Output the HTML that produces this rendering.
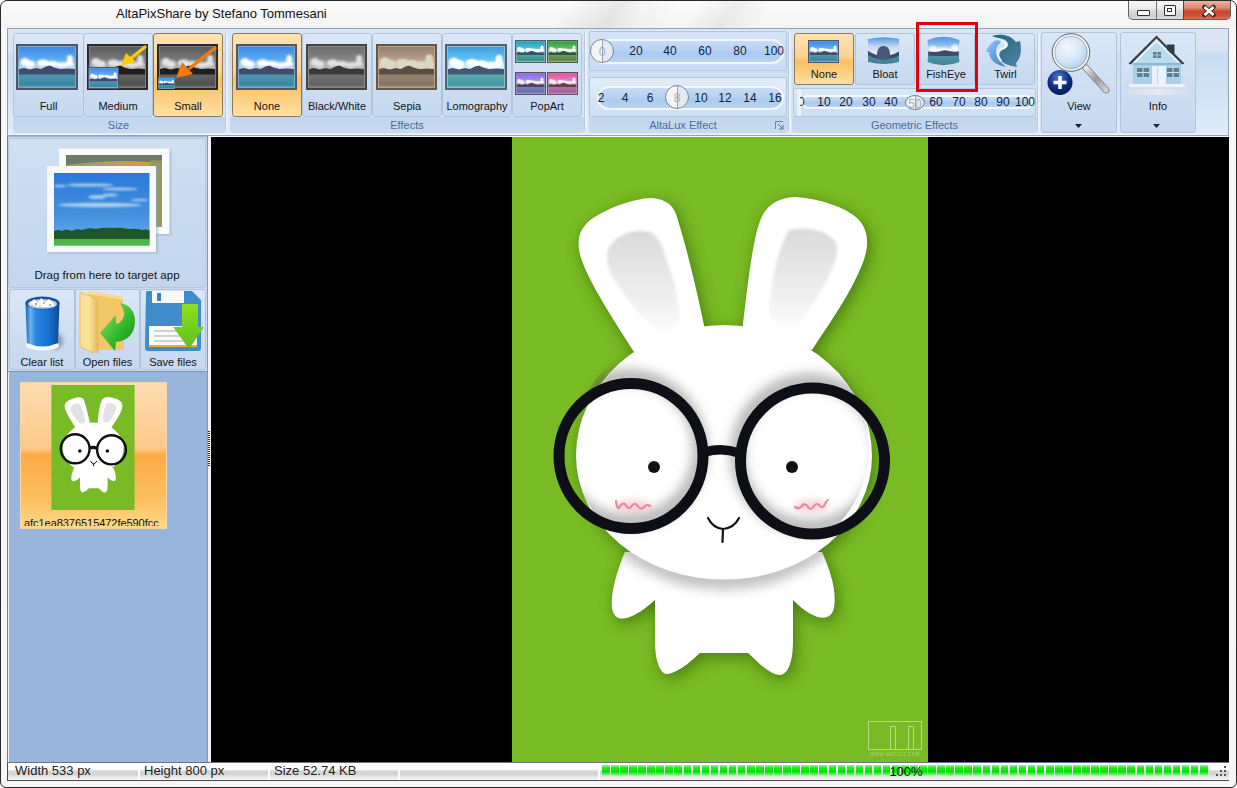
<!DOCTYPE html>
<html><head><meta charset="utf-8">
<style>
*{margin:0;padding:0;box-sizing:border-box}
html,body{width:1237px;height:788px;overflow:hidden;background:#fff}
body{position:relative;font-family:"Liberation Sans",sans-serif;color:#1e1e1e}
.a{position:absolute}
#frame{left:0;top:0;width:1237px;height:788px;border:1px solid #2a2a2a;border-radius:7px 7px 6px 6px;
 background:linear-gradient(#fbfbfb,#f3f3f3 25px,#f8f8f8 30px,#f6f6f6)}
#title{left:116px;top:6px;font-size:13px;color:#111;white-space:nowrap}
/* ribbon */
#ribbon{left:7px;top:28px;width:1222px;height:108px;border:1px solid #8fa3bb;
 background:linear-gradient(#dce6f3,#d9e4f2 20%,#cadcf1 24%,#d2e2f4 60%,#dfebf9 95%)}
.grp{position:absolute;top:33px;height:84px;border:1px solid #a9bfd8;border-radius:3px;
 background:linear-gradient(#d9e6f6,#cadcf1 45%,#c2d6ef)}
.glbl{position:absolute;top:118px;height:14px;font-size:11px;color:#4b6d9b;text-align:center;line-height:14px}
.sep{position:absolute;top:33px;width:1px;height:98px;background:#f4f8fd;border-left:1px solid #b7c9de}
.btn{position:absolute;top:33px;height:84px;border:1px solid #b0c4dc;border-radius:3px;
 background:linear-gradient(#dbe7f6,#cfdef2 50%,#c6d9f0)}
.btn.sel{border-color:#8e7a55;background:linear-gradient(#fde3b2,#fcd394 45%,#fbbf5e 55%,#fdd48c 85%,#fee2a8)}
.bl{position:absolute;left:0;right:0;font-size:11px;color:#151515;text-align:center;white-space:nowrap}
.land{position:absolute;border:2px solid #4d5766;
 background:
  linear-gradient(to bottom,transparent 0,transparent 62%,#5b6e86 62%,#3e4e63 68%,#44596c 72%,#3b8ea6 73%,#3a8399 100%),
  radial-gradient(ellipse 20% 18% at 18% 48%,#fff 40%,rgba(255,255,255,0) 100%),
  radial-gradient(ellipse 22% 14% at 45% 52%,#f4f6fb 40%,rgba(255,255,255,0) 100%),
  radial-gradient(ellipse 14% 20% at 86% 40%,#fff 40%,rgba(255,255,255,0) 100%),
  radial-gradient(ellipse 40% 12% at 60% 56%,#e7ecf6 30%,rgba(255,255,255,0) 100%),
  linear-gradient(#3f8fe3,#6cb0ee 40%,#b9d3ee 60%)}
.pill{position:absolute;border:2px solid #f3f8fe;background:linear-gradient(#c6dcf6,#b5d0f2 50%,#aacaf0 55%,#b8d3f3)}
.num{position:absolute;width:30px;text-align:center;font-size:12px;color:#15233a}
.knob{position:absolute;border:1px solid #7a8594;border-radius:50%;background:linear-gradient(90deg,#f4f5f6 50%,#e2eaf3 50%);text-align:center;overflow:hidden}
.knob span{font-size:12px;color:#a8aeb8;position:relative}
.knob i{position:absolute;left:50%;top:0;bottom:0;width:1px;background:#9aa4b0}
.seg{position:absolute;top:765px;width:7.6px;height:11px;background:linear-gradient(#9ff59a,#22ec20 25%,#00e400 60%,#5cf05a 85%,#c8f8c4)}
/* left panel */
#lp{left:7px;top:136px;width:202px;height:626px;background:#98b5dc;border-left:1px solid #8aa0bc}
#view{left:211px;top:137px;width:1018px;height:625px;background:#000}
#status{left:7px;top:762px;width:1222px;height:19px;border-bottom:1px solid #555;
 background:linear-gradient(#fefefe,#fbfbfb 45%,#d9d9d9 50%,#e6e6e6 80%,#f2f2f2)}
.st{position:absolute;top:0;font-size:13px;line-height:18px;color:#222;white-space:nowrap}
</style></head><body>
<div id="frame" class="a"></div>
<div class="a" style="left:1px;top:1px;width:1235px;height:27px;overflow:hidden;border-radius:6px 6px 0 0"><div class="a" style="left:560px;top:-5px;width:110px;height:40px;transform:skewX(-35deg);background:linear-gradient(90deg,rgba(0,0,0,0),rgba(0,0,0,0.07) 45%,rgba(0,0,0,0.02) 70%,rgba(0,0,0,0))"></div><div class="a" style="left:690px;top:-5px;width:70px;height:40px;transform:skewX(-35deg);background:linear-gradient(90deg,rgba(0,0,0,0),rgba(0,0,0,0.05) 50%,rgba(0,0,0,0))"></div></div>
<div id="title" class="a">AltaPixShare by Stefano Tommesani</div>

<div id="ribbon" class="a"></div>
<!--RIBBON-->
<svg width="0" height="0" style="position:absolute">
<defs>
<linearGradient id="sky" x1="0" y1="0" x2="0" y2="1"><stop offset="0" stop-color="#3a8be6"/><stop offset="0.3" stop-color="#5ca8f2"/><stop offset="0.55" stop-color="#c9d9ee"/></linearGradient>
<linearGradient id="water" x1="0" y1="0" x2="0" y2="1"><stop offset="0" stop-color="#4b97ae"/><stop offset="0.8" stop-color="#3b86a3"/><stop offset="1" stop-color="#5c9db5"/></linearGradient>
<filter id="cb" x="-30%" y="-30%" width="160%" height="160%"><feGaussianBlur stdDeviation="0.9"/></filter>
<symbol id="land" viewBox="0 0 62 46">
 <rect x="0" y="0" width="62" height="46" fill="#4b5767"/>
 <rect x="2" y="2" width="58" height="42" fill="#7fa8c4"/>
 <rect x="3" y="3" width="56" height="40" fill="url(#sky)"/>
 <g fill="#fff" filter="url(#cb)">
  <ellipse cx="9" cy="18" rx="4.5" ry="4"/>
  <ellipse cx="14" cy="20" rx="5" ry="3.5"/>
  <ellipse cx="27" cy="19" rx="6" ry="3.5"/>
  <ellipse cx="36" cy="20" rx="7" ry="3"/>
  <ellipse cx="46" cy="21" rx="6" ry="2.5"/>
  <ellipse cx="54" cy="15" rx="3" ry="4"/>
  <ellipse cx="53" cy="20" rx="5" ry="2.5"/>
 </g>
 <path d="M3 25 L8 24 L14 25.5 L20 24 L25 25 L30 22.5 L34 21.5 L38 23.5 L44 25 L52 24.5 L59 25 L59 31 L3 31 Z" fill="#3f4c6c"/>
 <rect x="3" y="30.5" width="56" height="12.5" fill="url(#water)"/>
</symbol>
</defs></svg>
<div class="a" style="left:13px;top:117px;width:212px;height:16px;border-radius:0 0 3px 3px;background:linear-gradient(#c3d6ee,#c8daf0)"></div>
<div class="a" style="left:230px;top:117px;width:354px;height:16px;border-radius:0 0 3px 3px;background:linear-gradient(#c3d6ee,#c8daf0)"></div>
<div class="a" style="left:589px;top:117px;width:199px;height:16px;border-radius:0 0 3px 3px;background:linear-gradient(#c3d6ee,#c8daf0)"></div>
<div class="a" style="left:792px;top:117px;width:245px;height:16px;border-radius:0 0 3px 3px;background:linear-gradient(#c3d6ee,#c8daf0)"></div>
<div class="a" style="left:8px;top:134px;width:1220px;height:1px;background:#eef4fb"></div>
<div class="a" style="left:225px;top:33px;width:4px;height:98px;background:linear-gradient(90deg,#b9cbe0 0,#b9cbe0 1px,#f2f6fb 1px,#e6eef8 3px,#cbdcf0 4px)"></div>
<div class="a" style="left:584px;top:33px;width:4px;height:98px;background:linear-gradient(90deg,#b9cbe0 0,#b9cbe0 1px,#f2f6fb 1px,#e6eef8 3px,#cbdcf0 4px)"></div>
<div class="a" style="left:788px;top:33px;width:4px;height:98px;background:linear-gradient(90deg,#b9cbe0 0,#b9cbe0 1px,#f2f6fb 1px,#e6eef8 3px,#cbdcf0 4px)"></div>
<div class="a" style="left:1037px;top:33px;width:4px;height:98px;background:linear-gradient(90deg,#b9cbe0 0,#b9cbe0 1px,#f2f6fb 1px,#e6eef8 3px,#cbdcf0 4px)"></div>
<div class="btn" style="left:13px;top:33px;width:71px;height:84px"><div class="bl" style="top:66px">Full</div></div>
<div class="btn" style="left:83px;top:33px;width:70px;height:84px"><div class="bl" style="top:66px">Medium</div></div>
<div class="btn sel" style="left:153px;top:33px;width:70px;height:84px"><div class="bl" style="top:66px">Small</div></div>
<svg class="a" style="left:16px;top:44px;" width="62" height="46" viewBox="0 0 62 46" preserveAspectRatio="none"><use href="#land"/></svg>
<svg class="a" style="left:87px;top:44px;filter:grayscale(1) brightness(0.78) contrast(1.4);" width="61" height="46" viewBox="0 0 62 46" preserveAspectRatio="none"><use href="#land"/></svg>
<svg class="a" style="left:88px;top:67px;" width="31" height="22" viewBox="0 0 62 46" preserveAspectRatio="none"><use href="#land"/></svg>
<svg class="a" style="left:118px;top:44px" width="30" height="26" viewBox="0 0 30 26"><path d="M27 3 L12 15" stroke="#f5cd00" stroke-width="3.5" stroke-linecap="round"/><path d="M3 22 L8 9 L18 18 Z" fill="#f5cd00"/></svg>
<svg class="a" style="left:157px;top:44px;filter:grayscale(1) brightness(0.78) contrast(1.4);" width="61" height="46" viewBox="0 0 62 46" preserveAspectRatio="none"><use href="#land"/></svg>
<svg class="a" style="left:158px;top:77px;" width="17" height="12" viewBox="0 0 62 46" preserveAspectRatio="none"><use href="#land"/></svg>
<svg class="a" style="left:172px;top:44px" width="46" height="36" viewBox="0 0 46 36"><path d="M43 4 L18 24" stroke="#f07a10" stroke-width="3.5" stroke-linecap="round"/><path d="M4 34 L10 18 L21 30 Z" fill="#f07a10"/></svg>
<div class="glbl" style="left:13px;width:211px">Size</div>
<div class="btn sel" style="left:232px;top:33px;width:70px;height:84px"><div class="bl" style="top:66px">None</div></div>
<div class="btn" style="left:302px;top:33px;width:70px;height:84px"><div class="bl" style="top:66px">Black/White</div></div>
<div class="btn" style="left:372px;top:33px;width:70px;height:84px"><div class="bl" style="top:66px">Sepia</div></div>
<div class="btn" style="left:442px;top:33px;width:70px;height:84px"><div class="bl" style="top:66px">Lomography</div></div>
<div class="btn" style="left:512px;top:33px;width:70px;height:84px"><div class="bl" style="top:66px">PopArt</div></div>
<svg class="a" style="left:236px;top:44px;" width="61" height="46" viewBox="0 0 62 46" preserveAspectRatio="none"><use href="#land"/></svg>
<svg class="a" style="left:306px;top:44px;filter:grayscale(1) brightness(0.85) contrast(1.1);" width="61" height="46" viewBox="0 0 62 46" preserveAspectRatio="none"><use href="#land"/></svg>
<svg class="a" style="left:376px;top:44px;filter:sepia(1) saturate(0.75) hue-rotate(-12deg) brightness(0.85);" width="61" height="46" viewBox="0 0 62 46" preserveAspectRatio="none"><use href="#land"/></svg>
<svg class="a" style="left:445px;top:44px;filter:saturate(0.85) brightness(1.12) hue-rotate(-12deg);" width="62" height="46" viewBox="0 0 62 46" preserveAspectRatio="none"><use href="#land"/></svg>
<svg class="a" style="left:515px;top:40px;filter:hue-rotate(-25deg) saturate(0.9) brightness(1.05);" width="31" height="23" viewBox="0 0 62 46" preserveAspectRatio="none"><use href="#land"/></svg>
<svg class="a" style="left:547px;top:40px;filter:hue-rotate(-95deg) saturate(0.85) brightness(1.0);" width="31" height="23" viewBox="0 0 62 46" preserveAspectRatio="none"><use href="#land"/></svg>
<svg class="a" style="left:515px;top:72px;filter:hue-rotate(45deg) saturate(0.9) brightness(0.95);" width="31" height="23" viewBox="0 0 62 46" preserveAspectRatio="none"><use href="#land"/></svg>
<svg class="a" style="left:547px;top:72px;filter:hue-rotate(105deg) saturate(0.9) brightness(0.95);" width="31" height="23" viewBox="0 0 62 46" preserveAspectRatio="none"><use href="#land"/></svg>
<div class="glbl" style="left:230px;width:354px">Effects</div>
<div class="a" style="left:589px;top:31px;width:198px;height:40px;border:1px solid #b3c8e0;border-radius:2px;background:linear-gradient(#d4e4f7,#c8dcf3)"></div>
<div class="a" style="left:589px;top:77px;width:198px;height:40px;border:1px solid #b3c8e0;border-radius:2px;background:linear-gradient(#e2ecf8,#cddff3)"></div>
<div class="pill" style="left:591px;top:39px;width:193px;height:25px;border-radius:12px"></div><div class="num" style="left:621px;top:39px;height:25px;line-height:25px">20</div><div class="num" style="left:655px;top:39px;height:25px;line-height:25px">40</div><div class="num" style="left:690px;top:39px;height:25px;line-height:25px">60</div><div class="num" style="left:725px;top:39px;height:25px;line-height:25px">80</div><div class="num" style="left:759px;top:39px;height:25px;line-height:25px">100</div><div class="knob" style="left:590px;top:39px;width:24px;height:24px;line-height:22px"><span>0</span><i></i></div>
<div class="pill" style="left:597px;top:86px;width:187px;height:24px;border-radius:12px"></div><div class="num" style="left:586px;top:86px;height:24px;line-height:24px">2</div><div class="num" style="left:610px;top:86px;height:24px;line-height:24px">4</div><div class="num" style="left:635px;top:86px;height:24px;line-height:24px">6</div><div class="num" style="left:686px;top:86px;height:24px;line-height:24px">10</div><div class="num" style="left:710px;top:86px;height:24px;line-height:24px">12</div><div class="num" style="left:735px;top:86px;height:24px;line-height:24px">14</div><div class="num" style="left:760px;top:86px;height:24px;line-height:24px">16</div><div class="knob" style="left:665px;top:85px;width:24px;height:24px;line-height:22px"><span>8</span><i></i></div>
<div class="glbl" style="left:589px;width:188px">AltaLux Effect</div>
<svg class="a" style="left:775px;top:121px" width="9" height="9" viewBox="0 0 9 9"><path d="M0.5 0.5 H8 M0.5 0.5 V8" stroke="#6d87a8" fill="none"/><path d="M3 3 L8 8 M8 4 V8 H4" stroke="#5a7090" fill="none"/></svg>
<div class="btn sel" style="left:794px;top:33px;width:60px;height:52px"><div class="bl" style="top:34px">None</div></div>
<div class="btn" style="left:855px;top:33px;width:60px;height:52px"><div class="bl" style="top:34px">Bloat</div></div>
<div class="btn" style="left:917px;top:33px;width:58px;height:52px"><div class="bl" style="top:34px">FishEye</div></div>
<div class="btn" style="left:976px;top:33px;width:59px;height:52px"><div class="bl" style="top:34px">Twirl</div></div>
<svg class="a" style="left:808px;top:40px;" width="31" height="23" viewBox="0 0 62 46" preserveAspectRatio="none"><use href="#land"/></svg>
<div class="a" style="left:793px;top:88px;width:243px;height:29px;border:1px solid #b3c8e0;border-radius:2px;background:linear-gradient(#dbe7f6,#cddff3)"></div>
<div class="pill" style="left:801px;top:95px;width:232px;height:14px;border-radius:7px"></div><div class="num" style="left:809px;top:95px;height:14px;line-height:14px">10</div><div class="num" style="left:831px;top:95px;height:14px;line-height:14px">20</div><div class="num" style="left:854px;top:95px;height:14px;line-height:14px">30</div><div class="num" style="left:876px;top:95px;height:14px;line-height:14px">40</div><div class="num" style="left:921px;top:95px;height:14px;line-height:14px">60</div><div class="num" style="left:944px;top:95px;height:14px;line-height:14px">70</div><div class="num" style="left:966px;top:95px;height:14px;line-height:14px">80</div><div class="num" style="left:988px;top:95px;height:14px;line-height:14px">90</div><div class="num" style="left:1010px;top:95px;height:14px;line-height:14px">100</div><div class="knob" style="left:905px;top:95px;width:20px;height:15px;line-height:13px"><span>50</span><i></i></div>
<div class="a" style="left:797px;top:89px;width:4px;height:27px;background:linear-gradient(90deg,#e4edf8,#f4f8fd)"></div><div class="a" style="left:800px;top:95px;width:8px;height:14px;overflow:hidden;font-size:12px;line-height:14px;color:#333"><span style="position:relative;left:-2px">0</span></div>
<div class="glbl" style="left:792px;width:245px">Geometric Effects</div>
<div class="btn" style="left:1041px;top:32px;width:76px;height:101px"><div class="bl" style="top:67px">View</div></div>
<div class="btn" style="left:1120px;top:32px;width:76px;height:101px"><div class="bl" style="top:67px">Info</div></div>
<svg class="a" style="left:927px;top:36px" width="33" height="30" viewBox="0 0 33 30">
<defs><clipPath id="pillow"><path d="M0.5 4 Q16.5 -2.5 32.5 4 Q31 15 32.5 26 Q16.5 32.5 0.5 26 Q2 15 0.5 4 Z"/></clipPath>
<linearGradient id="fsk" x1="0" y1="0" x2="0" y2="1"><stop offset="0" stop-color="#4a94e0"/><stop offset="0.3" stop-color="#8cbcec"/><stop offset="0.5" stop-color="#e4e8f4"/></linearGradient>
<linearGradient id="fwa" x1="0" y1="0" x2="0" y2="1"><stop offset="0" stop-color="#4f97ab"/><stop offset="1" stop-color="#3f7f98"/></linearGradient></defs>
<g clip-path="url(#pillow)">
<rect width="33" height="30" fill="url(#fsk)"/>
<g fill="#fff" opacity="0.85" filter="url(#cb)"><ellipse cx="6" cy="13" rx="4" ry="3"/><ellipse cx="16" cy="14" rx="8" ry="2.5"/><ellipse cx="28" cy="12" rx="4" ry="3.5"/></g>
<path d="M0 15 Q8 17 14 15 Q18 13.5 22 15 Q28 16.5 33 15 L33 20 Q16.5 21.5 0 20 Z" fill="#3e4b69"/>
<path d="M0 19.5 Q16.5 21 33 19.5 L33 30 L0 30 Z" fill="url(#fwa)"/>
</g></svg>
<svg class="a" style="left:868px;top:37px" width="32" height="28" viewBox="0 0 32 28">
<defs><clipPath id="pillow2"><path d="M0 2 Q16 -1.5 31 2 L31 25 Q16 29 0 25 Z"/></clipPath>
<linearGradient id="bsky" x1="0" y1="0" x2="0" y2="1"><stop offset="0" stop-color="#4e98e0"/><stop offset="0.35" stop-color="#c8d8f0"/><stop offset="0.6" stop-color="#e8e8f4"/></linearGradient>
<linearGradient id="bwat" x1="0" y1="0" x2="0" y2="1"><stop offset="0" stop-color="#4f8ea6"/><stop offset="1" stop-color="#3f7e96"/></linearGradient></defs>
<g clip-path="url(#pillow2)">
<rect width="32" height="28" fill="url(#bsky)"/>
<path d="M0 14 Q16 26 32 14 L32 28 L0 28 Z" fill="url(#bwat)"/>
<path d="M0 14 Q16 24 32 14 L32 18 Q16 27 0 18 Z" fill="#3d4a66"/>
<path d="M9 22 Q8 9 15.5 9 Q23 9 22 22 Z" fill="#4b5776"/>
</g></svg>
<svg class="a" style="left:982px;top:32px" width="44" height="38" viewBox="982 32 44 38">
<defs><linearGradient id="tw1" x1="0" y1="0" x2="1" y2="1"><stop offset="0" stop-color="#2a6476"/><stop offset="1" stop-color="#4d84a6"/></linearGradient>
<linearGradient id="tw2" x1="0" y1="0" x2="1" y2="1"><stop offset="0" stop-color="#9ccaf6"/><stop offset="0.5" stop-color="#5aa2e8"/><stop offset="1" stop-color="#3f7eb8"/></linearGradient></defs>
<path d="M 992 36 C 1001 33, 1011 35, 1016 42 L 1020 41 C 1022 50, 1021 58, 1016 63 L 1017 67 C 1010 66, 1003 64, 1000 59 C 997 54, 1000 49, 1005 48 C 1009 47, 1009 42, 1005 40 C 1001 38, 996 38, 992 36 Z" fill="url(#tw1)"/>
<path d="M 994 41 C 990 44, 987 48, 986 52 L 989 52 C 989 59, 995 65, 1006 67 C 1000 62, 995 56, 996 50 C 997 45, 1000 43, 1001 42 C 999 40, 996 40, 994 41 Z" fill="url(#tw2)"/>
<path d="M 1001 41 C 1006 42, 1008 46, 1004 48 C 998 50, 996 55, 1001 61" fill="none" stroke="#f0f6fc" stroke-width="2.2"/>
</svg>
<div class="a" style="left:916px;top:22px;width:62px;height:70px;border:3px solid #e0000e"></div>
<svg class="a" style="left:1045px;top:32px" width="68" height="66" viewBox="1045 32 68 66">
<defs><radialGradient id="lens" cx="0.4" cy="0.35" r="0.7"><stop offset="0" stop-color="#f4f8fd"/><stop offset="0.6" stop-color="#d4e4f5"/><stop offset="1" stop-color="#a9c6e6"/></radialGradient>
<linearGradient id="handle" x1="0" y1="0" x2="1" y2="1"><stop offset="0" stop-color="#e8e8e8"/><stop offset="0.5" stop-color="#9a9a9a"/><stop offset="1" stop-color="#d0d0d0"/></linearGradient>
<radialGradient id="plus" cx="0.45" cy="0.3" r="0.7"><stop offset="0" stop-color="#4f7fd0"/><stop offset="0.6" stop-color="#0c2f86"/><stop offset="1" stop-color="#061a55"/></radialGradient></defs>
<path d="M1086 68 L1106 90" stroke="#8d8d8d" stroke-width="7" stroke-linecap="round"/>
<path d="M1086 68 L1106 90" stroke="url(#handle)" stroke-width="5" stroke-linecap="round"/>
<circle cx="1071" cy="52.5" r="17.5" fill="url(#lens)" stroke="#f2f2f2" stroke-width="2.2"/>
<circle cx="1071" cy="52.5" r="18.8" fill="none" stroke="#5d6670" stroke-width="1"/>
<circle cx="1071" cy="52.5" r="16.2" fill="none" stroke="#8a96a4" stroke-width="0.6"/>
<circle cx="1060" cy="82.5" r="12.5" fill="url(#plus)"/>
<path d="M1060 76 V89 M1053.5 82.5 H1066.5" stroke="#fff" stroke-width="3.5"/>
</svg>
<svg class="a" style="left:1126px;top:33px" width="66" height="64" viewBox="1126 33 66 64">
<defs><linearGradient id="base" x1="0" y1="0" x2="1" y2="0"><stop offset="0" stop-color="#d8dde6"/><stop offset="0.5" stop-color="#eceef2"/><stop offset="1" stop-color="#d8dde6"/></linearGradient></defs>
<rect x="1167" y="44.5" width="7.5" height="9" fill="#2e3a44"/>
<rect x="1133" y="60" width="48" height="25" fill="#a9d0e6"/>
<path d="M1156.5 35.5 L1128.5 63.5 L1131 64.5 L1156.5 38.5 L1182 64.5 L1184.5 63.5 Z" fill="#33424e"/>
<path d="M1156.5 39.5 L1132 63.5 L1181 63.5 Z" fill="#eaf4fa"/>
<path d="M1156.5 42 L1135 63 L1178 63 Z" fill="#b9dcee"/>
<rect x="1133" y="63" width="48" height="2" fill="#8eb6cc"/>
<rect x="1153" y="52" width="8" height="6" fill="#5f7f92"/>
<path d="M1153 55 H1161 M1157 52 V58" stroke="#b7dcef" stroke-width="0.8"/>
<rect x="1137" y="68" width="12" height="9" fill="#5f7f92"/>
<rect x="1167" y="68" width="12" height="9" fill="#5f7f92"/>
<path d="M1137 72.5 H1149 M1143 68 V77 M1167 72.5 H1179 M1173 68 V77" stroke="#d0e6f1" stroke-width="1"/>
<rect x="1152" y="66" width="14" height="18" fill="#e9f2f8"/>
<path d="M1157.5 66 V84" stroke="#b9cfdc" stroke-width="0.8"/>
<rect x="1129" y="84" width="56" height="3" fill="#eef2f6"/>
<path d="M1128 89 L1186 89 L1190 95 L1124 95 Z" fill="url(#base)" opacity="0.8"/>
</svg>
<svg class="a" style="left:1075px;top:124px" width="7" height="4" viewBox="0 0 7 4"><path d="M0 0 H7 L3.5 4 Z" fill="#222"/></svg>
<svg class="a" style="left:1153px;top:124px" width="7" height="4" viewBox="0 0 7 4"><path d="M0 0 H7 L3.5 4 Z" fill="#222"/></svg>
<div class="a" style="left:1128px;top:1px;width:103px;height:19px;border:1px solid #5e5e5e;border-top:none;border-radius:0 0 5px 5px;overflow:hidden;background:linear-gradient(#f6f6f6,#ececec 40%,#d9d9d9 55%,#cfcfcf 85%,#e0e0e0)">
<div class="a" style="left:27px;top:0;width:1px;height:19px;background:#6f6f6f"></div>
<div class="a" style="left:54px;top:0;width:49px;height:19px;border-left:1px solid #6a3a30;background:linear-gradient(#eeb0a2,#e08a74 35%,#c94428 55%,#d0583a 80%,#e07a5e)"></div>
<div class="a" style="left:8px;top:9px;width:13px;height:6px;border:1.5px solid #2e2e2e;background:#fafafa;border-radius:1px"></div>
<div class="a" style="left:35px;top:4px;width:12px;height:11px;border:1.5px solid #2e2e2e;background:#fafafa;border-radius:1px"><div class="a" style="left:2px;top:2px;width:5px;height:4px;border:1.5px solid #2e2e2e"></div></div>
<svg class="a" style="left:72px;top:3px" width="16" height="14" viewBox="0 0 16 14"><path d="M3.5 3 L12.5 11 M12.5 3 L3.5 11" stroke="#4a2a26" stroke-width="4.6" stroke-linecap="round"/><path d="M3.5 3 L12.5 11 M12.5 3 L3.5 11" stroke="#fff" stroke-width="2.6" stroke-linecap="butt"/></svg>
</div>
<!--/RIBBON-->

<!--LEFT-->
<div class="a" style="left:7px;top:136px;width:202px;height:626px;background:#98b5dc"></div>
<div class="a" style="left:7px;top:136px;width:1px;height:626px;background:#6f7f94"></div><div class="a" style="left:8px;top:372px;width:1px;height:390px;background:#eef3fa"></div>
<div class="a" style="left:207px;top:136px;width:1px;height:626px;background:#8796ab"></div>
<div class="a" style="left:208px;top:136px;width:3px;height:626px;background:#f0f2f5"></div>
<div class="a" style="left:8px;top:137px;width:199px;height:234px;background:#c9daf0"></div>
<div class="a" style="left:8px;top:138px;width:198px;height:150px;border:1px solid #b4c7de;border-radius:3px;background:linear-gradient(#d0dff2,#c8daf0 60%,#c3d6ee)"></div>
<svg class="a" style="left:44px;top:146px" width="130" height="110" viewBox="44 146 130 110">
<defs>
<linearGradient id="fsky" x1="0" y1="0" x2="0" y2="1"><stop offset="0" stop-color="#2a78da"/><stop offset="0.6" stop-color="#4692de"/><stop offset="1" stop-color="#6cb0e8"/></linearGradient>
<linearGradient id="field" x1="0" y1="0" x2="1" y2="0.3"><stop offset="0" stop-color="#8c9a7a"/><stop offset="0.5" stop-color="#b5a060"/><stop offset="0.75" stop-color="#d89a3a"/><stop offset="1" stop-color="#9aa070"/></linearGradient>
<filter id="fsh"><feGaussianBlur stdDeviation="0.8"/></filter>
</defs>
<rect x="60" y="149.5" width="111" height="86" fill="#8aa0bb" opacity="0.5" filter="url(#fsh)"/>
<rect x="59" y="148.5" width="110.5" height="85.5" fill="#fbfbfb"/>
<rect x="66" y="155" width="96" height="72" fill="url(#field)"/>
<path d="M66 155 H162 V163 Q120 158 66 165 Z" fill="#6e7a6a"/>
<path d="M150 160 L162 160 L162 227 L152 227 Z" fill="#8e9a5c" opacity="0.8"/>
<rect x="48" y="167" width="110" height="86.5" fill="#8aa0bb" opacity="0.5" filter="url(#fsh)"/>
<rect x="47" y="166" width="109" height="86" fill="#f8f8f8"/>
<rect x="54" y="173" width="95.5" height="72.5" fill="url(#fsky)"/>
<g fill="#e8f2fb" opacity="0.65" filter="url(#fsh)">
<ellipse cx="90" cy="185" rx="24" ry="1.6"/><ellipse cx="120" cy="189" rx="18" ry="1.4"/>
<ellipse cx="97" cy="197" rx="9" ry="2"/><ellipse cx="110" cy="195" rx="8" ry="1.4"/><ellipse cx="100" cy="205" rx="42" ry="2.2"/>
<ellipse cx="60" cy="186" rx="6" ry="1.3"/><ellipse cx="140" cy="200" rx="9" ry="1.2"/>
</g>
<path d="M54 231 Q58 229 62 231 Q66 228 72 231 Q76 228 82 230 Q88 227 96 229 Q104 227 112 228 Q120 227 128 229 Q136 228 142 230 Q146 229 149.5 230 L149.5 240.5 L54 240.5 Z" fill="#1d5628"/>
<rect x="54" y="239.5" width="95.5" height="6" fill="#4ab648"/><rect x="54" y="239" width="95.5" height="1" fill="#6ac060" opacity="0.6"/>
</svg>
<div class="a" style="left:8px;top:269px;width:198px;text-align:center;font-size:11.5px;color:#151515;white-space:nowrap">Drag from here to target app</div>
<div class="btn" style="left:9px;top:289px;width:66px;height:81px"><div class="bl" style="top:66px">Clear list</div></div>
<div class="btn" style="left:75px;top:289px;width:65px;height:81px"><div class="bl" style="top:66px">Open files</div></div>
<div class="btn" style="left:140px;top:289px;width:66px;height:81px"><div class="bl" style="top:66px">Save files</div></div>
<svg class="a" style="left:22px;top:294px" width="46" height="60" viewBox="22 294 46 60">
<defs><linearGradient id="bin" x1="0" y1="0" x2="1" y2="0"><stop offset="0" stop-color="#1a5fb0"/><stop offset="0.15" stop-color="#6ab2f2"/><stop offset="0.3" stop-color="#2a86e0"/><stop offset="0.7" stop-color="#1470cc"/><stop offset="1" stop-color="#0c4a96"/></linearGradient>
<filter id="bsh" x="-50%" y="-50%" width="200%" height="200%"><feGaussianBlur stdDeviation="2.2"/></filter></defs>
<ellipse cx="56" cy="341" rx="7" ry="8" fill="#3a4a60" opacity="0.45" filter="url(#bsh)"/>
<ellipse cx="42.5" cy="345.5" rx="16.5" ry="5" fill="#f6f9fc"/>
<path d="M25.5 303 L27 343 Q42.5 350 58 343 L59.5 303 Z" fill="url(#bin)"/>
<ellipse cx="42.5" cy="303" rx="17" ry="6.5" fill="#1552a0"/>
<ellipse cx="42.5" cy="304" rx="14.5" ry="4.8" fill="#c9ced6"/>
<g fill="#fff"><path d="M30 304 L34 299 L38 303 L41 298 L45 302 L49 299 L53 303 L55 306 L46 307 L38 307 Z"/></g>
<g fill="#8a929c" opacity="0.8"><circle cx="36" cy="304" r="1.2"/><circle cx="44" cy="303" r="1"/><circle cx="50" cy="305" r="1.1"/><circle cx="40" cy="306" r="0.8"/></g>
</svg>
<svg class="a" style="left:77px;top:290px" width="60" height="63" viewBox="77 290 60 63">
<defs><linearGradient id="fold" x1="0" y1="0" x2="1" y2="0"><stop offset="0" stop-color="#f5e08a"/><stop offset="0.5" stop-color="#fbe39a"/><stop offset="1" stop-color="#e8b858"/></linearGradient>
<linearGradient id="garr" x1="0" y1="0" x2="1" y2="1"><stop offset="0" stop-color="#9be86a"/><stop offset="0.6" stop-color="#2fb52a"/><stop offset="1" stop-color="#138a1a"/></linearGradient></defs>
<path d="M88 291 L123 297 L124 350 L92 350 Z" fill="#f0c868"/>
<path d="M88 291 L123 297 L123 300 L88 294 Z" fill="#f8dc90"/>
<path d="M80 292 L97 299 L98 355 L80 347 Z" fill="url(#fold)"/>
<path d="M80 292 L97 299 L98 355 L80 347 Z" fill="none" stroke="#d9b25a" stroke-width="0.7"/>
<path d="M100 333 L116 315 L116 324 Q124 322 124 313 Q123 307 120 303 Q135 306 135 322 Q134 340 116 342 L115 351 Z" fill="url(#garr)"/>
</svg>
<svg class="a" style="left:144px;top:290px" width="62" height="62" viewBox="144 290 62 62">
<defs><linearGradient id="arr2" x1="0" y1="0" x2="0" y2="1"><stop offset="0" stop-color="#8fe01a"/><stop offset="1" stop-color="#5fbf20"/></linearGradient></defs>
<path d="M146 293 Q145 291 148 291 L192 291 L201 300 L201 348 Q201 351 198 351 L148 351 Q145 351 145 348 Z" fill="#3f8cc8"/>
<rect x="152" y="291" width="32" height="12" fill="#fafafa"/>
<rect x="157" y="293" width="4" height="8" fill="#3a84bf"/>
<rect x="149" y="326" width="48" height="21" fill="#fbfbfb"/>
<rect x="149" y="345" width="48" height="2" fill="#f0a830"/>
<path d="M154 331 H188 M154 336 H188 M154 341 H188" stroke="#a8a8b0" stroke-width="1.2"/>
<path d="M182 304 L198 304 L198 327 L204 327 L189 349 L173 327 L182 327 Z" fill="url(#arr2)"/>
</svg>
<div class="a" style="left:8px;top:371px;width:199px;height:1px;background:#7f93ad"></div>
<div class="a" style="left:20px;top:382px;width:147px;height:147px;background:linear-gradient(#fedcb0,#fdc98a 45%,#fbab45 50%,#fdc060 80%,#ffd88a);border:1px solid #f5d8b0"></div>
<svg class="a" style="left:51px;top:385px" width="84" height="125" viewBox="512 137 416 625">
<rect x="512" y="137" width="416" height="625" fill="#79bb24"/>
<g fill="#fff">
<path d="M 634 352 C 612 318, 588 280, 581 258 C 575 238, 580 225, 598 215 C 615 205, 635 199, 650 198 C 662 198, 672 203, 676 214 C 686 245, 697 290, 706 335 Z"/>
<path d="M 742 332 C 747 290, 752 245, 759 224 C 764 206, 778 197, 796 197 C 820 199, 845 207, 857 218 C 870 230, 869 248, 862 265 C 850 295, 830 322, 812 350 Z"/>
<path d="M 625 552 C 615 575, 609 600, 613 612 C 617 623, 632 621, 655 600 L 655 642 C 655 660, 660 675, 668 674 C 680 672, 692 660, 700 653 L 748 653 C 756 660, 770 676, 781 675 C 791 672, 793 655, 793 640 L 793 600 C 815 622, 831 622, 834 608 C 837 590, 830 570, 822 552 Z"/>
<ellipse cx="721" cy="452" rx="152" ry="128"/>
</g>
<g fill="#e2e2e2"><path d="M 607 258 C 606 240, 628 229, 645 231 C 655 232, 660 240, 664 252 C 672 275, 680 300, 680 315 C 680 328, 668 332, 657 329 C 640 318, 628 300, 618 285 C 610 273, 607 266, 607 258 Z"/>
<path d="M 789 230 C 810 226, 832 232, 837 245 C 840 262, 820 295, 800 322 C 790 330, 770 325, 769 312 C 770 290, 775 255, 789 230 Z"/></g>
<g fill="none" stroke="#0e0e16" stroke-width="12"><ellipse cx="631" cy="456" rx="72" ry="72.5"/><ellipse cx="812.5" cy="461" rx="72" ry="73"/><path d="M 705 452 Q 722 446 739 453" stroke-width="16"/></g>
<circle cx="654" cy="467" r="9" fill="#111"/><circle cx="792" cy="467" r="9" fill="#111"/>
<path d="M 708 517 Q 714 530 723 531 Q 733 530 739 517 M 723 531 L 723 543" stroke="#111" stroke-width="5" fill="none"/>
</svg>
<div class="a" style="left:24px;top:517px;width:142px;height:9px;overflow:hidden;font-size:11px;line-height:13px;color:#111;white-space:nowrap;letter-spacing:-0.05px">afc1ea8376515472fe590fcc</div>
<div class="a" style="left:208px;top:431px;width:2px;height:36px;background:repeating-linear-gradient(#333 0,#333 1px,#eee 1px,#eee 2px)"></div>
<!--/LEFT-->
<div id="view" class="a"></div>
<svg class="a" style="left:512px;top:137px" width="416" height="625" viewBox="512 137 416 625">
<defs>
 <filter id="bl8" x="-30%" y="-30%" width="160%" height="160%"><feGaussianBlur stdDeviation="6"/></filter>
 <filter id="bl10" x="-30%" y="-30%" width="160%" height="160%"><feGaussianBlur stdDeviation="7.5"/></filter>
 <filter id="bl15"><feGaussianBlur stdDeviation="1.5"/></filter>
 <filter id="bl3" x="-30%" y="-30%" width="160%" height="160%"><feGaussianBlur stdDeviation="3"/></filter>
 <filter id="bl1"><feGaussianBlur stdDeviation="0.6"/></filter>
 <linearGradient id="inear" x1="0" y1="0" x2="0" y2="1"><stop offset="0" stop-color="#dadada"/><stop offset="0.6" stop-color="#ececec"/><stop offset="1" stop-color="#fbfbfb"/></linearGradient>
 <clipPath id="bodyclip"><path id="bodyp" d="M 625 552 C 615 575, 609 600, 613 612 C 617 623, 632 621, 655 600 L 655 642 C 655 660, 660 675, 668 674 C 680 672, 692 660, 700 653 L 748 653 C 756 660, 770 676, 781 675 C 791 672, 793 655, 793 640 L 793 600 C 815 622, 831 622, 834 608 C 837 590, 830 570, 822 552 Z"/></clipPath>
 <radialGradient id="glassL" cx="0.5" cy="0.5" r="0.5"><stop offset="0.8" stop-color="#fff" stop-opacity="0"/><stop offset="1" stop-color="#bdbdbd" stop-opacity="0.7"/></radialGradient>
</defs>
<rect x="512" y="137" width="416" height="625" fill="#79bb24"/>
<g fill="#3a6a0c" opacity="0.78" filter="url(#bl10)" transform="translate(3,4)">
 <path d="M 634 352 C 612 318, 588 280, 581 258 C 575 238, 580 225, 598 215 C 615 205, 635 199, 650 198 C 662 198, 672 203, 676 214 C 686 245, 697 290, 706 335 Z"/>
 <path d="M 742 332 C 747 290, 752 245, 759 224 C 764 206, 778 197, 796 197 C 820 199, 845 207, 857 218 C 870 230, 869 248, 862 265 C 850 295, 830 322, 812 350 Z"/>
 <path d="M 576 456 A 148 131 0 0 1 872 456 A 148 123.6 0 0 1 576 456 Z"/>
 <use href="#bodyp"/>
</g>
<g fill="#fff">
 <path d="M 634 352 C 612 318, 588 280, 581 258 C 575 238, 580 225, 598 215 C 615 205, 635 199, 650 198 C 662 198, 672 203, 676 214 C 686 245, 697 290, 706 335 Z"/>
 <path d="M 742 332 C 747 290, 752 245, 759 224 C 764 206, 778 197, 796 197 C 820 199, 845 207, 857 218 C 870 230, 869 248, 862 265 C 850 295, 830 322, 812 350 Z"/>
 <use href="#bodyp"/>
</g>
<g fill="url(#inear)" filter="url(#bl15)">
 <path d="M 607 258 C 606 240, 628 229, 645 231 C 655 232, 660 240, 664 252 C 672 275, 680 300, 680 315 C 680 328, 668 332, 657 329 C 640 318, 628 300, 618 285 C 610 273, 607 266, 607 258 Z"/>
 <path d="M 789 230 C 810 226, 832 232, 837 245 C 840 262, 820 295, 800 322 C 790 330, 770 325, 769 312 C 770 290, 775 255, 789 230 Z"/>
</g>
<g clip-path="url(#bodyclip)"><ellipse cx="724" cy="466" rx="146" ry="124" fill="#888" opacity="0.5" filter="url(#bl8)"/></g>
<path d="M 576 456 A 148 131 0 0 1 872 456 A 148 123.6 0 0 1 576 456 Z" fill="#fff"/>
<clipPath id="headclip"><path d="M 576 456 A 148 131 0 0 1 872 456 A 148 123.6 0 0 1 576 456 Z"/></clipPath>
<g clip-path="url(#headclip)" fill="none" stroke="#555" stroke-width="14" opacity="0.45" filter="url(#bl8)" transform="translate(-3,-7)">
 <ellipse cx="631" cy="456" rx="72" ry="72.5"/>
 <ellipse cx="812.5" cy="461" rx="72" ry="73"/>
</g>
<g fill="none" stroke="#0e0e16" stroke-width="11">
 <ellipse cx="631" cy="456" rx="72" ry="72.5"/>
 <ellipse cx="812.5" cy="461" rx="72" ry="73"/>
 <path d="M 705 452 Q 722 447 739 453" stroke-width="9.5"/>
</g>
<circle cx="654" cy="467" r="6" fill="#111"/>
<circle cx="792" cy="467" r="6" fill="#111"/>
<g fill="#f7b8c4" opacity="0.55" filter="url(#bl3)"><ellipse cx="633" cy="506" rx="17" ry="7"/><ellipse cx="811" cy="506" rx="17" ry="7"/></g>
<g fill="none" stroke="#e58b9c" stroke-width="2.2" stroke-linejoin="round" stroke-linecap="round">
 <path d="M 616 501 Q 617 509 619 508 Q 622 502 625 504 Q 628 510 631 507 Q 634 502 637 505 Q 641 511 644 507 Q 647 504 650 506"/>
 <path d="M 795 507 Q 799 510 802 506 Q 805 502 808 507 Q 811 511 814 506 Q 817 502 820 506 Q 823 509 825 504 Q 827 500 828 500"/>
</g>
<g fill="none" stroke="#111" stroke-width="2.2" stroke-linecap="round">
 <path d="M 708 518 Q 713 528 723 529 Q 734 528 739 518"/>
 <path d="M 723 529 L 722.5 542"/>
</g>
<g fill="none" stroke="#c4ee9a" stroke-width="1" opacity="0.75">
 <rect x="868.5" y="721.5" width="53" height="28"/>
 <path d="M 890.5 749 V 726.5 H 895.5 V 749 M 908.5 749 V 726.5 H 913.5 V 749"/>
</g>
<text x="895" y="756" font-size="4.6" opacity="0.6" fill="#c4ee9a" text-anchor="middle" font-family="Liberation Sans" letter-spacing="0.4">WWW.METU21.COM</text>
</svg>
<!--STATUS-->
<div class="a" style="left:7px;top:762px;width:1222px;height:19px;border-left:1px solid #4a4a4a;border-top:1px solid #6a7482;border-bottom:1px solid #4a4a4a;background:linear-gradient(#ffffff,#fdfdfd 38%,#dcdcdc 45%,#d2d2d2 62%,#e6e6e6 80%,#f4f4f4)"></div>
<div class="a" style="left:138px;top:770px;width:2px;height:10px;background:#fbfbfb"></div>
<div class="a" style="left:268px;top:770px;width:2px;height:10px;background:#fbfbfb"></div>
<div class="a" style="left:398px;top:770px;width:2px;height:10px;background:#fbfbfb"></div>
<div class="a" style="left:598px;top:770px;width:2px;height:10px;background:#fbfbfb"></div>
<div class="st" style="left:15px;top:762px">Width 533 px</div>
<div class="st" style="left:144px;top:762px">Height 800 px</div>
<div class="st" style="left:274px;top:762px">Size 52.74 KB</div>
<div class="seg" style="left:602px"></div><div class="seg" style="left:611.06px"></div><div class="seg" style="left:620.1199999999999px"></div><div class="seg" style="left:629.1799999999998px"></div><div class="seg" style="left:638.2399999999998px"></div><div class="seg" style="left:647.2999999999997px"></div><div class="seg" style="left:656.3599999999997px"></div><div class="seg" style="left:665.4199999999996px"></div><div class="seg" style="left:674.4799999999996px"></div><div class="seg" style="left:683.5399999999995px"></div><div class="seg" style="left:692.5999999999995px"></div><div class="seg" style="left:701.6599999999994px"></div><div class="seg" style="left:710.7199999999993px"></div><div class="seg" style="left:719.7799999999993px"></div><div class="seg" style="left:728.8399999999992px"></div><div class="seg" style="left:737.8999999999992px"></div><div class="seg" style="left:746.9599999999991px"></div><div class="seg" style="left:756.0199999999991px"></div><div class="seg" style="left:765.079999999999px"></div><div class="seg" style="left:774.139999999999px"></div><div class="seg" style="left:783.1999999999989px"></div><div class="seg" style="left:792.2599999999989px"></div><div class="seg" style="left:801.3199999999988px"></div><div class="seg" style="left:810.3799999999987px"></div><div class="seg" style="left:819.4399999999987px"></div><div class="seg" style="left:828.4999999999986px"></div><div class="seg" style="left:837.5599999999986px"></div><div class="seg" style="left:846.6199999999985px"></div><div class="seg" style="left:855.6799999999985px"></div><div class="seg" style="left:864.7399999999984px"></div><div class="seg" style="left:873.7999999999984px"></div><div class="seg" style="left:882.8599999999983px"></div><div class="seg" style="left:891.9199999999983px"></div><div class="seg" style="left:900.9799999999982px"></div><div class="seg" style="left:910.0399999999981px"></div><div class="seg" style="left:919.0999999999981px"></div><div class="seg" style="left:928.159999999998px"></div><div class="seg" style="left:937.219999999998px"></div><div class="seg" style="left:946.2799999999979px"></div><div class="seg" style="left:955.3399999999979px"></div><div class="seg" style="left:964.3999999999978px"></div><div class="seg" style="left:973.4599999999978px"></div><div class="seg" style="left:982.5199999999977px"></div><div class="seg" style="left:991.5799999999977px"></div><div class="seg" style="left:1000.6399999999976px"></div><div class="seg" style="left:1009.6999999999975px"></div><div class="seg" style="left:1018.7599999999975px"></div><div class="seg" style="left:1027.8199999999974px"></div><div class="seg" style="left:1036.8799999999974px"></div><div class="seg" style="left:1045.9399999999973px"></div><div class="seg" style="left:1054.9999999999973px"></div><div class="seg" style="left:1064.0599999999972px"></div><div class="seg" style="left:1073.1199999999972px"></div><div class="seg" style="left:1082.179999999997px"></div><div class="seg" style="left:1091.239999999997px"></div><div class="seg" style="left:1100.299999999997px"></div><div class="seg" style="left:1109.359999999997px"></div><div class="seg" style="left:1118.419999999997px"></div><div class="seg" style="left:1127.4799999999968px"></div><div class="seg" style="left:1136.5399999999968px"></div><div class="seg" style="left:1145.5999999999967px"></div><div class="seg" style="left:1154.6599999999967px"></div><div class="seg" style="left:1163.7199999999966px"></div><div class="seg" style="left:1172.7799999999966px"></div><div class="seg" style="left:1181.8399999999965px"></div><div class="seg" style="left:1190.8999999999965px"></div><div class="seg" style="left:1199.9599999999964px"></div>
<div class="a" style="left:866px;top:763px;width:80px;text-align:center;font-size:13px;line-height:18px;color:#111">100%</div>
<svg class="a" style="left:1212px;top:764px" width="16" height="15" viewBox="0 0 16 15"><g fill="#555"><rect x="12" y="2" width="2" height="2"/><rect x="8" y="6" width="2" height="2"/><rect x="12" y="6" width="2" height="2"/><rect x="4" y="10" width="2" height="2"/><rect x="8" y="10" width="2" height="2"/><rect x="12" y="10" width="2" height="2"/></g></svg>
<!--/STATUS-->
</body></html>
